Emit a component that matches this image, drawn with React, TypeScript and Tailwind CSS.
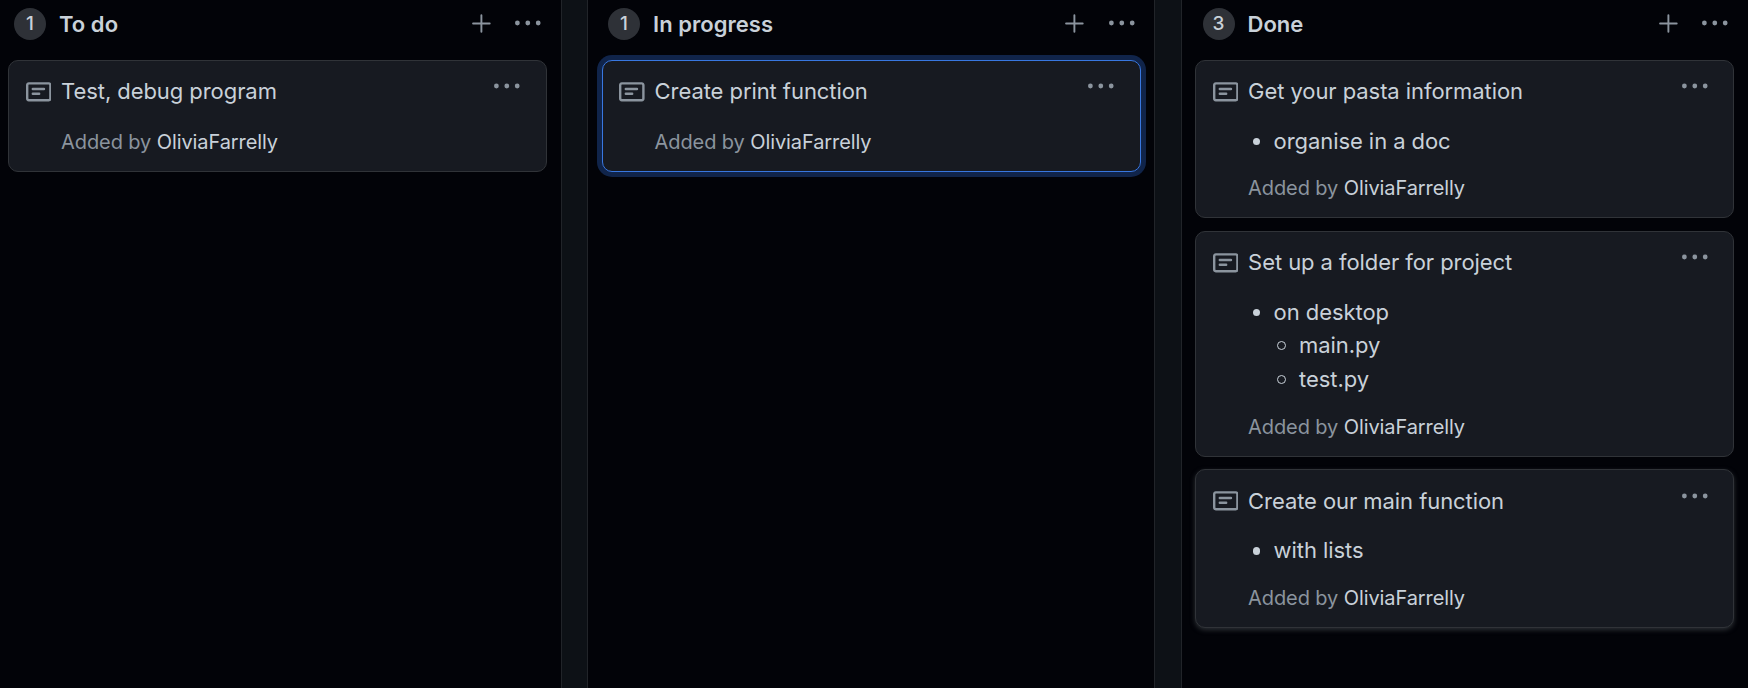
import React from "react";

type Item = { text: string; children?: string[] };
type CardData = { title: string; items?: Item[]; state?: "focused" | "raised"; size: string };
type ColumnData = { name: string; cards: CardData[]; frame: string; inset: string };

const columns: ColumnData[] = [
  {
    name: "To do",
    frame: "w-[562px] border-r pl-2 pr-[14px]",
    inset: "pl-[6px] pr-[6px]",
    cards: [{ title: "Test, debug program", size: "h-28 pt-[13px] pl-[16.5px] pr-[26px]" }],
  },
  {
    name: "In progress",
    frame: "ml-[25px] w-[568px] border-x pl-[14px] pr-[13px]",
    inset: "pl-[6px] pr-[6.5px]",
    cards: [{ title: "Create print function", state: "focused", size: "h-28 pt-[13px] pl-4 pr-[26px]" }],
  },
  {
    name: "Done",
    frame: "ml-[26px] w-[567px] border-l pl-[13px] pr-[14px]",
    inset: "pl-[7.5px] pr-[6px]",
    cards: [
      {
        title: "Get your pasta information",
        items: [{ text: "organise in a doc" }],
        size: "h-[158px] pt-[13px] pl-[16.5px] pr-[25px]",
      },
      {
        title: "Set up a folder for project",
        items: [{ text: "on desktop", children: ["main.py", "test.py"] }],
        size: "mt-[13px] h-[226px] pt-[13px] pl-[16.5px] pr-[25px]",
      },
      {
        title: "Create our main function",
        items: [{ text: "with lists" }],
        state: "raised",
        size: "mt-3 h-[159px] pt-[13.5px] pl-[16.5px] pr-[25px]",
      },
    ],
  },
];

function Kebab() {
  return (
    <svg viewBox="0 0 16 16" className="size-[25.6px] shrink-0 fill-[#8b949e]">
      <path d="M8 9a1.5 1.5 0 1 0 0-3 1.5 1.5 0 0 0 0 3ZM1.5 9a1.5 1.5 0 1 0 0-3 1.5 1.5 0 0 0 0 3Zm13 0a1.5 1.5 0 1 0 0-3 1.5 1.5 0 0 0 0 3Z" />
    </svg>
  );
}

function Plus() {
  return (
    <svg viewBox="0 0 16 16" className="size-[25.6px] shrink-0 fill-[#8b949e]">
      <path d="M7.75 2.1a.6.6 0 0 1 .6.6v4.55h4.6a.6.6 0 0 1 0 1.2h-4.6V13a.6.6 0 0 1-1.2 0V8.45h-4.6a.6.6 0 0 1 0-1.2h4.6V2.7a.6.6 0 0 1 .6-.6Z" />
    </svg>
  );
}

function Note() {
  return (
    <svg viewBox="0 0 16 16" className="mt-[4.5px] size-[25.6px] shrink-0 fill-[#8b949e]">
      <path
        fillRule="evenodd"
        d="M0 3.75C0 2.784.784 2 1.75 2h12.5c.966 0 1.75.784 1.75 1.75v8.5A1.75 1.75 0 0 1 14.25 14H1.75A1.75 1.75 0 0 1 0 12.25v-8.5zm1.75-.25a.25.25 0 0 0-.25.25v8.5c0 .138.112.25.25.25h12.5a.25.25 0 0 0 .25-.25v-8.5a.25.25 0 0 0-.25-.25H1.75zM3.5 6.25a.75.75 0 0 1 .75-.75h7a.75.75 0 0 1 0 1.5h-7a.75.75 0 0 1-.75-.75zm.75 2.25a.75.75 0 0 0 0 1.5h4a.75.75 0 0 0 0-1.5h-4z"
      />
    </svg>
  );
}

function Card({ card }: { card: CardData }) {
  const look =
    card.state === "focused"
      ? "border-[#3877e0] shadow-[0_0_0_5px_#10244a]"
      : card.state === "raised"
        ? "border-[#303338] shadow-[0_2px_5px_#2b2f34]"
        : "border-[#303338]";
  return (
    <article className={`flex rounded-[10px] border bg-[#171a21] ${card.size} ${look}`}>
      <Note />
      <div className="ml-[10px] flex min-w-0 grow flex-col">
        <h3 className="text-[22px] leading-[34px] tracking-[-0.07px]">{card.title}</h3>
        {card.items && (
          <ul className="mt-[16.5px] text-[22px] leading-[33.6px] tracking-[-0.07px]">
            {card.items.map((item) => (
              <li key={item.text}>
                <div className="flex items-center">
                  <span className="ml-[4.5px] mr-[13.5px] size-[7.5px] rounded-full bg-[#c9d1d9]" />
                  {item.text}
                </div>
                {item.children && (
                  <ul>
                    {item.children.map((child) => (
                      <li key={child} className="flex items-center">
                        <span className="ml-[28.5px] mr-[13.5px] size-[9px] rounded-full border border-[#c9d1d9]" />
                        {child}
                      </li>
                    ))}
                  </ul>
                )}
              </li>
            ))}
          </ul>
        )}
        <p className="mb-[14px] mt-auto text-[20px] leading-[30px] tracking-[-0.1px] text-[#8b949e]">
          Added by <a className="text-[#c9d1d9]">OliviaFarrelly</a>
        </p>
      </div>
      <div>
        <Kebab />
      </div>
    </article>
  );
}

function Column({ column }: { column: ColumnData }) {
  return (
    <section className={`h-full shrink-0 border-[#212429] bg-[#020308] ${column.frame}`}>
      <header className={`flex h-[60px] items-center pb-3 ${column.inset}`}>
        <span className="flex size-8 items-center justify-center rounded-full bg-[#2e3137] text-[19px] font-medium">
          {column.cards.length}
        </span>
        <h2 className="ml-[13px] grow text-[22px] font-semibold tracking-[0.04px]">{column.name}</h2>
        <Plus />
        <div className="ml-[21px]">
          <Kebab />
        </div>
      </header>
      <div className="flex flex-col">
        {column.cards.map((card) => (
          <Card key={card.title} card={card} />
        ))}
      </div>
    </section>
  );
}

export default function App() {
  return (
    <main className="flex h-[688px] w-[1748px] overflow-hidden bg-[#0d1116] font-['Inter',sans-serif] text-[#c9d1d9]">
      {columns.map((column) => (
        <Column key={column.name} column={column} />
      ))}
    </main>
  );
}
